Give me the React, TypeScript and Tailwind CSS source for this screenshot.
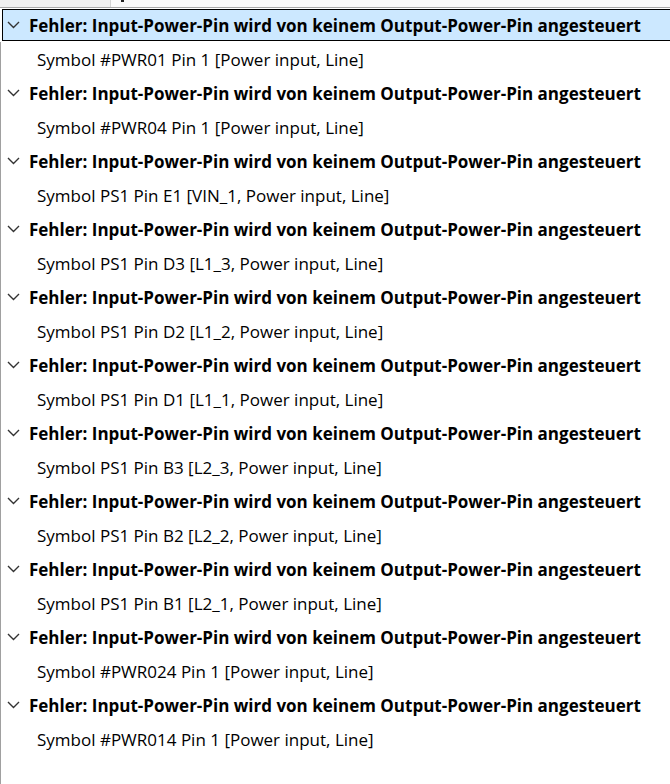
const TITLE = 'Fehler: Input-Power-Pin wird von keinem Output-Power-Pin angesteuert';

const ITEMS = [
  'Symbol #PWR01 Pin 1 [Power input, Line]',
  'Symbol #PWR04 Pin 1 [Power input, Line]',
  'Symbol PS1 Pin E1 [VIN_1, Power input, Line]',
  'Symbol PS1 Pin D3 [L1_3, Power input, Line]',
  'Symbol PS1 Pin D2 [L1_2, Power input, Line]',
  'Symbol PS1 Pin D1 [L1_1, Power input, Line]',
  'Symbol PS1 Pin B3 [L2_3, Power input, Line]',
  'Symbol PS1 Pin B2 [L2_2, Power input, Line]',
  'Symbol PS1 Pin B1 [L2_1, Power input, Line]',
  'Symbol #PWR024 Pin 1 [Power input, Line]',
  'Symbol #PWR014 Pin 1 [Power input, Line]',
];

function Chevron() {
  return (
    <svg width="13" height="8" viewBox="0 0 13 8" className="shrink-0">
      <polyline points="1,1 6.5,6.5 12,1" fill="none" stroke="#333" strokeWidth="1.4" />
    </svg>
  );
}

function Header({ selected }: { selected: boolean }) {
  if (selected) {
    return (
      <div className="flex h-[34px] bg-white">
        <div className="mt-px mb-px ml-[2px] -mr-4 flex flex-1 items-center border border-black bg-[#cce8ff] pl-[4px]">
          <Chevron />
          <span className="ml-[9px] whitespace-nowrap font-bold text-black">{TITLE}</span>
        </div>
      </div>
    );
  }
  return (
    <div className="flex h-[34px] items-center border-l border-[#a0a0a0] pl-[6px]">
      <Chevron />
      <span className="ml-[9px] whitespace-nowrap font-bold text-black">{TITLE}</span>
    </div>
  );
}

export default function App() {
  return (
    <div
      className="flex h-[784px] w-[670px] flex-col overflow-hidden bg-white text-[17px] leading-[23px]"
      style={{ fontFamily: '"Open Sans", sans-serif' }}
    >
      <div className="flex h-[7px] shrink-0">
        <div className="w-[110px] bg-[#f0f0f0]" />
        <div className="relative flex-1 border-l border-[#d4d4d4] bg-[#fafafa]">
          <div className="absolute left-[10px] top-0 h-[2px] w-[3px] bg-[#222]" />
        </div>
      </div>
      <div className="h-px shrink-0 bg-[#a8a8a8]" />
      <div className="flex flex-1 flex-col">
        {ITEMS.map((item, i) => (
          <div key={item}>
            <Header selected={i === 0} />
            <div className="flex h-[34px] items-center border-l border-[#a0a0a0] pl-[36px]">
              <span className="whitespace-nowrap text-black">{item}</span>
            </div>
          </div>
        ))}
        <div className="flex-1 border-l border-[#a0a0a0]" />
      </div>
    </div>
  );
}
